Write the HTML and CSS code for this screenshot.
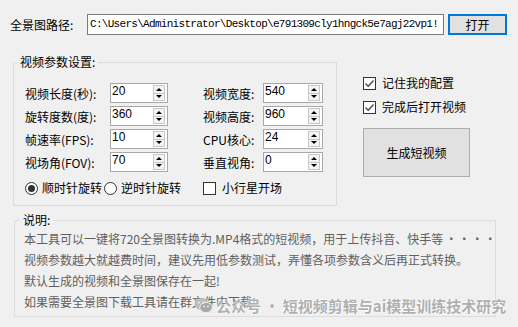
FILE: index.html
```html
<!DOCTYPE html>
<html>
   <head>
      <meta http-equiv="Content-Type" content="text/html; charset=UTF-8">
      <title>全景图转短视频</title>
      <link rel="stylesheet" href="styles.css">
   </head>
   <body>
      <div class="path-row">
         <span class="path-label">全景图路径:</span>
         <div class="path-box">C:\Users\Administrator\Desktop\e791309cly1hngck5e7agj22vp1!</div>
         <button class="btn btn-open">打开</button>
      </div>
      <div class="main">
         <fieldset class="group params">
            <legend>视频参数设置:</legend>
            <div class="params-body">
               <div class="grid">
                  <span class="lbl">视频长度(秒):</span>
                  <div class="spin"><span class="val">20</span><span class="arrows"><i class="up"></i><i class="down"></i></span></div>
                  <span class="lbl">视频宽度:</span>
                  <div class="spin wide"><span class="val">540</span><span class="arrows"><i class="up"></i><i class="down"></i></span></div>

                  <span class="lbl">旋转度数(度):</span>
                  <div class="spin"><span class="val">360</span><span class="arrows"><i class="up"></i><i class="down"></i></span></div>
                  <span class="lbl">视频高度:</span>
                  <div class="spin wide"><span class="val">960</span><span class="arrows"><i class="up"></i><i class="down"></i></span></div>

                  <span class="lbl">帧速率(FPS):</span>
                  <div class="spin"><span class="val">10</span><span class="arrows"><i class="up"></i><i class="down"></i></span></div>
                  <span class="lbl">CPU核心:</span>
                  <div class="spin wide"><span class="val">24</span><span class="arrows"><i class="up"></i><i class="down"></i></span></div>

                  <span class="lbl">视场角(FOV):</span>
                  <div class="spin"><span class="val">70</span><span class="arrows"><i class="up"></i><i class="down"></i></span></div>
                  <span class="lbl">垂直视角:</span>
                  <div class="spin wide"><span class="val">0</span><span class="arrows"><i class="up"></i><i class="down"></i></span></div>
               </div>
               <div class="opts-row">
                  <label class="opt opt-cw"><span class="radio checked"></span>顺时针旋转</label>
                  <label class="opt opt-ccw"><span class="radio"></span>逆时针旋转</label>
                  <label class="opt"><span class="check"></span>小行星开场</label>
               </div>
            </div>
         </fieldset>
         <div class="side">
            <label class="opt"><span class="check on"><svg width="11" height="11" viewBox="0 0 11 11"><path d="M1.5 5.5 L4.2 8.2 L9.5 2.5" fill="none" stroke="#444" stroke-width="1.3"/></svg></span>记住我的配置</label>
            <label class="opt"><span class="check on"><svg width="11" height="11" viewBox="0 0 11 11"><path d="M1.5 5.5 L4.2 8.2 L9.5 2.5" fill="none" stroke="#444" stroke-width="1.3"/></svg></span>完成后打开视频</label>
            <button class="btn btn-make">生成短视频</button>
         </div>
      </div>
      <fieldset class="group desc">
         <legend>说明:</legend>
         <div class="desc-body">
            <p>本工具可以一键将720全景图转换为.MP4格式的短视频，用于上传抖音、快手等<span class="dots">····</span></p>
            <p>视频参数越大就越费时间，建议先用低参数测试，弄懂各项参数含义后再正式转换。</p>
            <p>默认生成的视频和全景图保存在一起!</p>
            <p>如果需要全景图下载工具请在群文件中下载!</p>
         </div>
      </fieldset>
      <div class="watermark">
         <svg width="19" height="17" viewBox="0 0 19 17">
            <ellipse cx="7.5" cy="7" rx="7" ry="6" fill="#bdbdbd"/>
            <ellipse cx="12" cy="10.5" rx="6.2" ry="5.2" fill="#a8a8a8" stroke="#f0f0f0" stroke-width="1"/>
            <circle cx="5" cy="5.5" r="1" fill="#f0f0f0"/>
            <circle cx="9.5" cy="5.5" r="1" fill="#f0f0f0"/>
            <circle cx="10" cy="9.5" r="0.9" fill="#f0f0f0"/>
            <circle cx="14" cy="9.5" r="0.9" fill="#f0f0f0"/>
         </svg>
         <span>公众号 · 短视频剪辑与ai模型训练技术研究</span>
      </div>
   </body>
</html>
```

FILE: styles.css
```css
body{margin:0;background:#f0f0f0;font-family:"Noto Sans CJK SC","Microsoft YaHei",sans-serif;font-size:12px;color:#000;position:relative;width:518px;height:327px;overflow:hidden}
.path-row{display:flex;align-items:center;padding:14px 0 0 10px;height:21px}
.path-label{width:77px;font-size:12px}
.path-box{width:353px;height:19px;border:1px solid #7a7a7a;background:#fff;font-family:"Liberation Mono",monospace;font-size:11px;letter-spacing:-0.7px;line-height:19px;padding-left:2px;white-space:nowrap;overflow:hidden;box-sizing:content-box}
.btn{font-family:"Noto Sans CJK SC",sans-serif;font-size:12px;color:#000;background:#e1e1e1;border:1px solid #adadad;padding:0;margin:0}
.btn-open{margin-left:4px;width:59px;height:21px;border:2px solid #0078d7}
.main{display:flex;margin-top:20px;align-items:flex-start}
.group{margin:0;padding:0;border:1px solid #dcdcdc;min-width:0}
.group legend{font-size:12px;line-height:14px;padding:0 3px;margin-left:3px}
.params{margin-left:13px;width:322px}
.params-body{padding:14px 0 10px 11px}
.grid{display:grid;grid-template-columns:85px 93px 60px 60px;grid-auto-rows:20px;row-gap:3px;align-items:center}
.lbl{white-space:nowrap}
.spin{display:flex;width:56px;height:18px;border:1px solid #a8a8a8;background:#fff;justify-content:space-between}
.spin.wide{width:58px}
.val{font-family:"Liberation Sans",Arial,sans-serif;font-size:12px;line-height:14px;padding-left:1px}
.arrows{display:flex;flex-direction:column;width:12px;margin:1px 2px 1px 0}
.arrows i{flex:1;border:1px solid #c8c8c8;background:#f4f4f4;display:flex;align-items:center;justify-content:center}
.arrows i.down{border-top:0}
.arrows i::after{content:"";width:0;height:0;border-left:3px solid transparent;border-right:3px solid transparent}
.arrows i.up::after{border-bottom:3px solid #000}
.arrows i.down::after{border-top:3px solid #000}
.opts-row{display:flex;margin-top:9px;height:14px;align-items:center}
.opt{display:flex;align-items:center;white-space:nowrap;line-height:14px}
.opt-cw{width:79px}
.opt-ccw{width:99px}
.radio{width:11px;height:11px;border:1px solid #333;border-radius:50%;background:#fff;margin-right:4px;display:flex;align-items:center;justify-content:center}
.radio.checked::after{content:"";width:7px;height:7px;border-radius:50%;background:#333}
.check{width:11px;height:11px;border:1px solid #333;background:#fff;margin-right:6px;display:flex;align-items:center;justify-content:center}
.side{display:flex;flex-direction:column;margin-left:26px;padding-top:21px;gap:10px}
.btn-make{margin-top:4px;width:107px;height:49px}
.desc{margin:7px 0 0 14px;width:480px}
.desc legend{margin-left:5px}
.desc-body{padding:1px 0 4px 9px;color:#606060}
.desc-body p{margin:0;line-height:21px;white-space:nowrap}
.dots{letter-spacing:1px;margin-left:2px}
.watermark{position:absolute;left:194px;top:295px;display:flex;align-items:center;gap:3px;color:rgba(165,165,165,0.9);font-size:15px;font-weight:bold;text-shadow:0 0 2px #fff,0 0 2px #fff}
```
